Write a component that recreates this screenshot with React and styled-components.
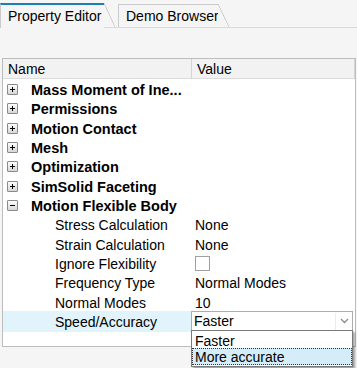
import styled, { createGlobalStyle } from 'styled-components';

const GlobalStyle = createGlobalStyle`
  body {
    margin: 0;
    background: #f5f5f5;
    font-family: "Liberation Sans", Arial, sans-serif;
    font-size: 14px;
    color: #000;
  }
`;

const Page = styled.div`
  width: 357px;
  height: 368px;
  overflow: hidden;
  position: relative;
`;

const TabStrip = styled.div`
  display: flex;
  align-items: flex-end;
  height: 27px;
  border-bottom: 1px solid #d9d9d9;
`;

const Tab = styled.div`
  position: relative;
  box-sizing: border-box;
  width: ${(p) => p.$width}px;
  height: ${(p) => (p.$active ? 25 : 23)}px;
  margin-left: ${(p) => p.$offset}px;
  margin-bottom: ${(p) => (p.$active ? -1 : 0)}px;
  padding: 3px 0 0 7px;
  border-left: 1px solid #cacaca;
  border-top: ${(p) => (p.$active ? '2px solid #1b7fb1' : '1px solid #cacaca')};
  background: #f5f5f5;
  line-height: 17px;
  white-space: nowrap;
  z-index: ${(p) => (p.$active ? 1 : 0)};

  &::after {
    content: '';
    position: absolute;
    top: ${(p) => (p.$active ? -2 : -1)}px;
    right: -11px;
    width: 11px;
    height: calc(100% + 1px);
    background: linear-gradient(
      to top right,
      #f5f5f5 calc(50% - 0.7px),
      #c4c4c4 50%,
      transparent calc(50% + 0.7px)
    );
  }
`;

const Panel = styled.div`
  position: relative;
  box-sizing: border-box;
  margin: 30px 0 0 2px;
  width: 354px;
  height: 289px;
  border: 1px solid #bdbdbd;
  background: #fff;
`;

const Header = styled.div`
  display: grid;
  grid-template-columns: 189px 1fr;
  height: 19px;
  border-bottom: 1px solid #dcdcdc;
  background: #f2f2f2;
  line-height: 19px;
`;

const HeaderCell = styled.div`
  box-sizing: border-box;
  padding: 1px 0 0 ${(p) => p.$pad}px;
  border-right: 1px solid #d4d4d4;
`;

const Row = styled.div`
  display: grid;
  grid-template-columns: 188px 1fr;
  height: 19.33px;
  line-height: 19px;
`;

const NameCell = styled.div`
  box-sizing: border-box;
  display: flex;
  align-items: center;
  padding: 2px 0 0 ${(p) => (p.$child ? 52 : 4)}px;
  background: ${(p) => (p.$selected ? '#e1f4fc' : 'transparent')};
  font-weight: ${(p) => (p.$group ? 700 : 400)};
  font-size: ${(p) => (p.$group ? 14.5 : 14)}px;
  white-space: nowrap;
`;

const ValueCell = styled.div`
  position: relative;
  box-sizing: border-box;
  display: flex;
  align-items: center;
  padding: ${(p) => (p.$bare ? '0' : '2px 0 0 4px')};
`;

const Expander = styled.span`
  position: relative;
  box-sizing: border-box;
  width: 11px;
  height: 11px;
  margin: -2px 13px 0 0;
  border: 1px solid #8a8a8a;
  border-radius: 1px;
  background: linear-gradient(#fdfdfd, #d6d6d6);

  &::before {
    content: '';
    position: absolute;
    left: 2px;
    top: 4px;
    width: 5px;
    height: 1px;
    background: #000;
  }

  &::after {
    content: '';
    display: ${(p) => (p.$open ? 'none' : 'block')};
    position: absolute;
    left: 4px;
    top: 2px;
    width: 1px;
    height: 5px;
    background: #000;
  }
`;

const Checkbox = styled.span`
  box-sizing: border-box;
  width: 15px;
  height: 15px;
  margin-top: -2px;
  border: 1px solid #a0a0a0;
  background: #fff;
`;

const Combo = styled.div`
  position: relative;
  box-sizing: border-box;
  display: flex;
  align-items: center;
  width: 162px;
  height: 20px;
  margin-top: -1px;
  padding: 1px 0 0 2px;
  border: 1px solid #adadad;
  background: #fff;
`;

const ComboText = styled.span`
  flex: 1;
`;

const ArrowButton = styled.span`
  display: flex;
  align-items: center;
  justify-content: center;
  width: 16px;
  height: 100%;
  border-left: 1px solid #ececec;
`;

const DropList = styled.div`
  position: absolute;
  top: 18px;
  left: -1px;
  box-sizing: border-box;
  width: 162px;
  padding: 1px 0;
  border: 1px solid #7a7a7a;
  background: #fff;
  box-shadow: 2px 2px 2px rgba(0, 0, 0, 0.35);
  z-index: 2;
`;

const DropItem = styled.div`
  box-sizing: border-box;
  height: 16.5px;
  line-height: 16px;
  padding-left: 2px;
  background: ${(p) => (p.$selected ? '#d5edf8' : '#fff')};
  border: 1px dotted ${(p) => (p.$selected ? '#333' : 'transparent')};
`;

const groups = [
  'Mass Moment of Ine...',
  'Permissions',
  'Motion Contact',
  'Mesh',
  'Optimization',
  'SimSolid Faceting',
];

const props = [
  { name: 'Stress Calculation', value: 'None' },
  { name: 'Strain Calculation', value: 'None' },
  { name: 'Ignore Flexibility', check: true },
  { name: 'Frequency Type', value: 'Normal Modes' },
  { name: 'Normal Modes', value: '10' },
];

const Chevron = () => (
  <svg width="9" height="6" viewBox="0 0 9 6">
    <path d="M1 1 L4.5 4.5 L8 1" fill="none" stroke="#8c8c8c" strokeWidth="1.3" />
  </svg>
);

export default function App() {
  return (
    <Page>
      <GlobalStyle />
      <TabStrip>
        <Tab $active $width={104} $offset={0}>Property Editor</Tab>
        <Tab $width={100} $offset={14}>Demo Browser</Tab>
      </TabStrip>
      <Panel>
        <Header>
          <HeaderCell $pad={5}>Name</HeaderCell>
          <HeaderCell $pad={5}>Value</HeaderCell>
        </Header>
        {groups.map((g) => (
          <Row key={g}>
            <NameCell $group>
              <Expander />
              {g}
            </NameCell>
            <ValueCell />
          </Row>
        ))}
        <Row>
          <NameCell $group>
            <Expander $open />
            Motion Flexible Body
          </NameCell>
          <ValueCell />
        </Row>
        {props.map((p) => (
          <Row key={p.name}>
            <NameCell $child>{p.name}</NameCell>
            <ValueCell>{p.check ? <Checkbox /> : p.value}</ValueCell>
          </Row>
        ))}
        <Row>
          <NameCell $child $selected>Speed/Accuracy</NameCell>
          <ValueCell $bare>
            <Combo>
              <ComboText>Faster</ComboText>
              <ArrowButton>
                <Chevron />
              </ArrowButton>
              <DropList>
                <DropItem>Faster</DropItem>
                <DropItem $selected>More accurate</DropItem>
              </DropList>
            </Combo>
          </ValueCell>
        </Row>
      </Panel>
    </Page>
  );
}
